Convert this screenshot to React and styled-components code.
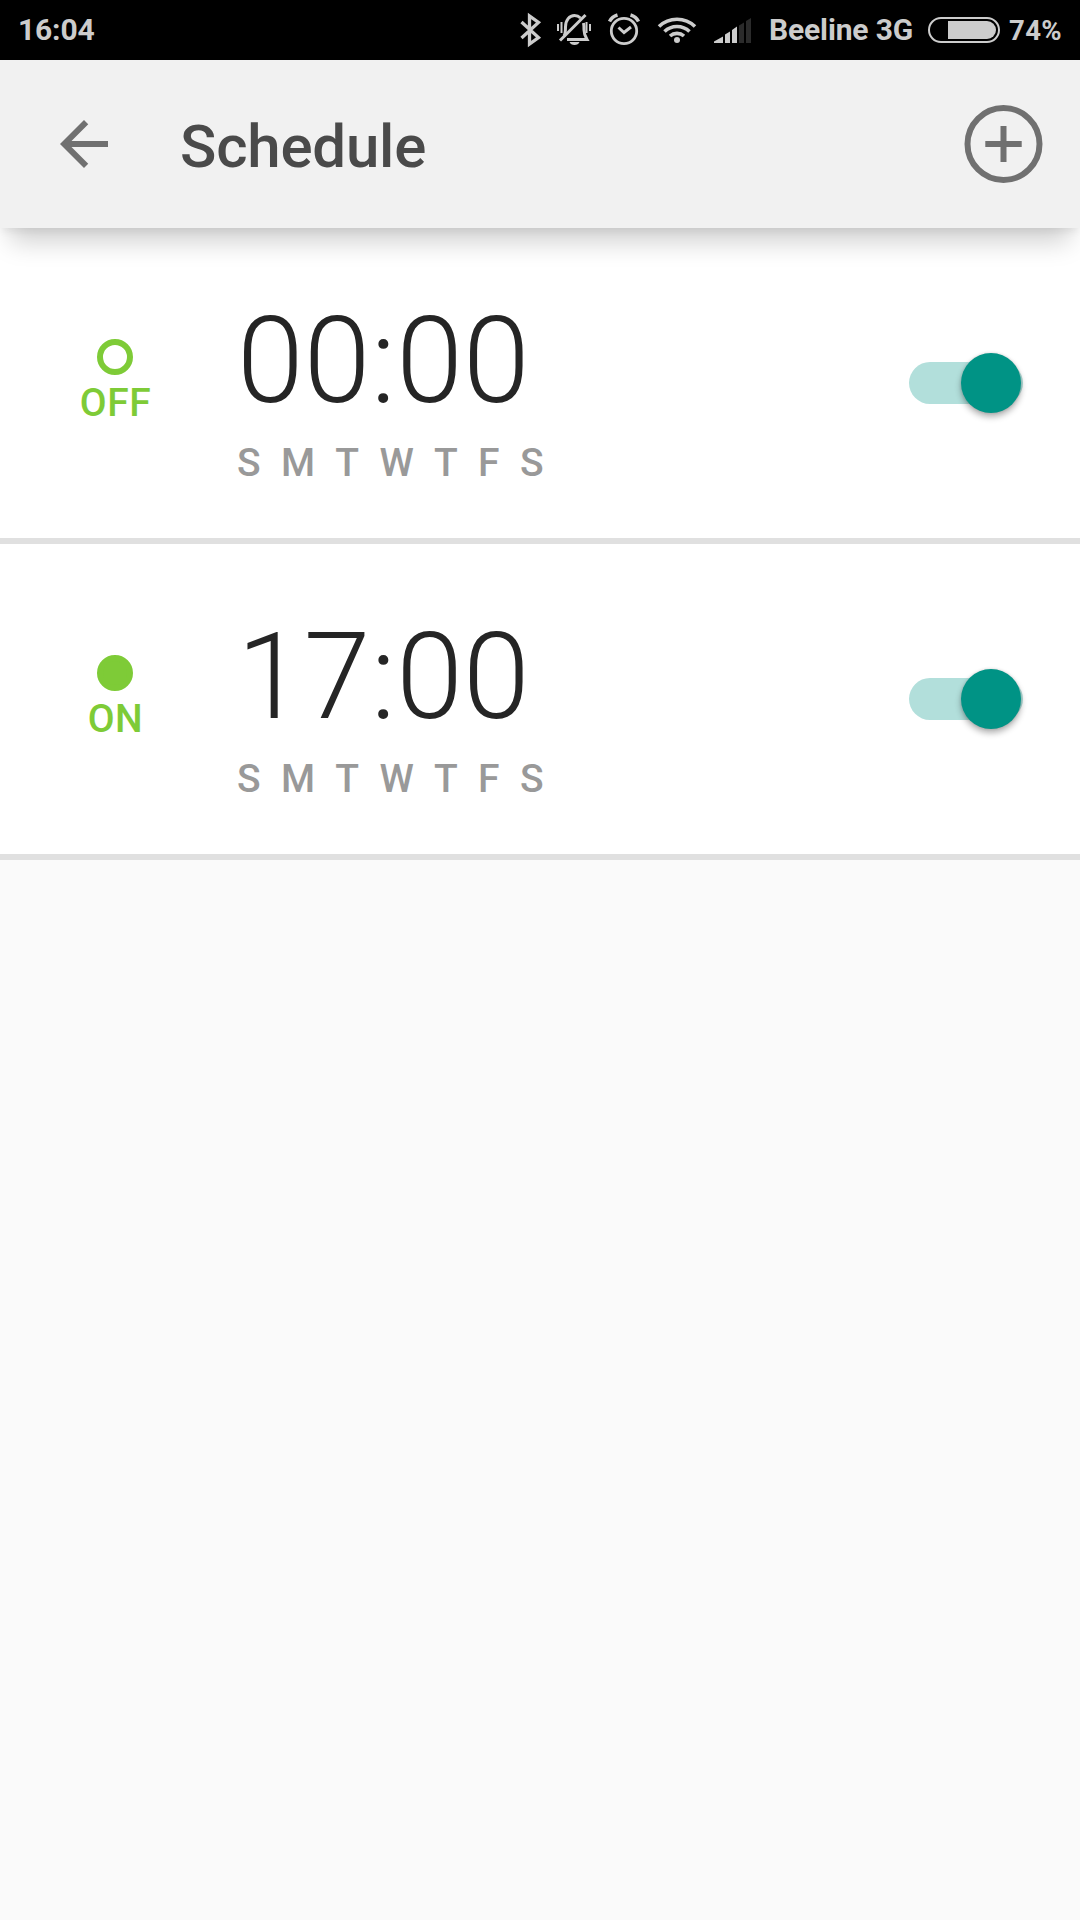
import React, { useState } from "react"
import styled, { createGlobalStyle } from "styled-components"

const GlobalStyle = createGlobalStyle`
  * {
    box-sizing: border-box;
  }

  body {
    margin: 0;
    background: #fafafa;
    font-family: Roboto, "Noto Sans", sans-serif;
  }
`

const Screen = styled.div`
  display: flex;
  flex-direction: column;
  width: 1080px;
  height: 1920px;
  overflow: hidden;
  background: #fafafa;
`

const StatusBarStyles = styled.div`
  display: flex;
  align-items: center;
  justify-content: space-between;
  height: 60px;
  padding: 0 18px;
  background: #000;
  color: #ccc;
  font-size: 30px;
  font-weight: 700;
  line-height: 60px;
  letter-spacing: -0.15px;
  white-space: nowrap;

  svg {
    display: block;
    flex: none;
  }
`

const StatusGroup = styled.div`
  display: flex;
  align-items: center;
`

const Carrier = styled.span`
  margin-left: 16px;
  width: 143px;
`

const Battery = styled.div`
  display: flex;
  justify-content: flex-end;
  width: 72px;
  height: 26px;
  margin-left: 16px;
  padding: 2px;
  border: 2px solid #ccc;
  border-radius: 13px;
`

const BatteryLevel = styled.div`
  height: 18px;
  border-radius: 0 9px 9px 0;
  background: #ccc;
`

const Percent = styled.span`
  width: 53px;
  margin-left: 9px;
  padding-top: 1px;
  font-size: 27.5px;
  letter-spacing: 0.4px;
`

const Header = styled.header`
  position: relative;
  z-index: 1;
  display: flex;
  align-items: center;
  height: 168px;
  padding: 0 37px 0 48px;
  background: #f1f1f1;
  box-shadow:
    0 5px 8px -2px rgba(0, 0, 0, 0.07),
    0 24px 24px -10px rgba(0, 0, 0, 0.18);
`

const IconButton = styled.button`
  display: flex;
  padding: 0;
  border: 0;
  background: none;
  color: #707070;

  svg {
    display: block;
  }
`

const Title = styled.h1`
  flex: 1;
  margin: 6px 0 0 60px;
  color: #4a4a4a;
  font-size: 60px;
  font-weight: 500;
  line-height: 70px;
  letter-spacing: -0.2px;
`

const Row = styled.section`
  display: flex;
  height: 316px;
  padding-right: 57px;
  border-bottom: 6px solid #e0e0e0;
  background: #fff;
`

const State = styled.div`
  display: flex;
  flex-direction: column;
  align-items: center;
  width: 230px;
  padding-top: 111px;
  color: #7ecb37;
  font-size: 39px;
  font-weight: 500;
  line-height: 46px;
`

const StateLabel = styled.span`
  padding-left: 1px;
  letter-spacing: 0.6px;
`

const Dot = styled.span`
  width: 36px;
  height: 36px;
  margin-bottom: 5px;
  border: 6px solid #7ecb37;
  border-radius: 50%;
  background: ${(props) => (props.$filled ? "#7ecb37" : "transparent")};
`

const Details = styled.div`
  flex: 1;
  padding: 63px 0 0 7px;
`

const Time = styled.div`
  color: #252525;
  font-size: 120px;
  font-weight: 300;
  line-height: 141px;
  letter-spacing: 0.3px;
`

const Days = styled.div`
  display: flex;
  gap: 20.3px;
  margin-top: 8px;
  color: #999;
  font-size: 39px;
  font-weight: 500;
  line-height: 46px;
`

const Toggle = styled.button`
  display: flex;
  align-items: center;
  justify-content: ${(props) => (props.$on ? "flex-end" : "flex-start")};
  align-self: center;
  width: 114px;
  height: 42px;
  padding: 0 2px 1px 0;
  border: 0;
  border-radius: 21px;
  background: ${(props) => (props.$on ? "#b2dfdb" : "#b9b9b9")};
`

const Thumb = styled.span`
  flex: none;
  width: 60px;
  height: 60px;
  border-radius: 50%;
  background: ${(props) => (props.$on ? "#009385" : "#f1f1f1")};
  box-shadow:
    0 0 3px rgba(0, 0, 0, 0.15),
    0 4px 6px rgba(0, 0, 0, 0.3);
`

// All five indicators share one strip so their spacing stays fixed
const Indicators = () => (
  <svg width="234" height="60" viewBox="519 0 234 60" fill="none" stroke="#ccc">
    <path
      d="M521.5 22l17 15.500-9 6.500V16l9 6.500-17 15.500"
      strokeWidth="3.300"
    />
    {/* muted bell */}
    <g strokeWidth="3">
      <path d="M564 36c1.500-2 1.500-4 1.500-9 0-7 4-11.500 9-11.500 2.500 0 4.500 1 6 2.500" />
      <path d="M583.500 23c.5 2 .5 4 .5 7 0 4 1 6 3 9.500H567" />
      <path d="M560 40.500L585.500 15" />
    </g>
    <path d="M569.500 42h10c-1 4-9 4-10 0z" fill="#ccc" stroke="none" />
    <path d="M558 24v7M561.500 22v11M586.500 22v11M590 24v7" strokeWidth="2" />
    {/* alarm */}
    <circle cx="624" cy="31" r="12.700" strokeWidth="2.800" />
    <path d="M618.500 27.500l5.500 5 7-5.500" strokeWidth="3" />
    <path d="M609.500 21.500c1.500-3 4.500-5.500 8-6.500M638.500 21.500c-1.500-3-4.500-5.500-8-6.500" strokeWidth="3.500" />
    {/* wifi */}
    <path
      d="M659 26.500a26 26 0 0 1 36 0M664.500 31.500a18 18 0 0 1 25 0M670 36a10.500 10.500 0 0 1 14 0"
      strokeWidth="3.600"
    />
    <circle cx="677" cy="40" r="3" fill="#ccc" stroke="none" />
    {/* signal */}
    <g stroke="none" fill="#ccc">
      <path d="M714 43v-1.500l9-5V43zM725 43v-8.500l5-3V43zM732 43V30l5-3.500V43z" />
      <path d="M739 43V25.500l5-3V43zM746 43V21l5-3v25z" fill="#2b2b2b" />
    </g>
  </svg>
)

const StatusBar = ({ battery }) => (
  <StatusBarStyles>
    <span>16:04</span>
    <StatusGroup>
      <Indicators />
      <Carrier>Beeline 3G</Carrier>
      <Battery>
        <BatteryLevel style={{ width: `${battery * 0.65}px` }} />
      </Battery>
      <Percent>{battery}%</Percent>
    </StatusGroup>
  </StatusBarStyles>
)

const ScheduleRow = ({ action, time }) => {
  const [enabled, setEnabled] = useState(true)
  return (
    <Row>
      <State>
        <Dot $filled={action === "ON"} />
        <StateLabel>{action}</StateLabel>
      </State>
      <Details>
        <Time>{time}</Time>
        <Days>
          {["S", "M", "T", "W", "T", "F", "S"].map((day, index) => (
            <span key={index}>{day}</span>
          ))}
        </Days>
      </Details>
      <Toggle
        $on={enabled}
        role="switch"
        aria-checked={enabled}
        onClick={() => setEnabled(!enabled)}
      >
        <Thumb $on={enabled} />
      </Toggle>
    </Row>
  )
}

const schedules = [
  { action: "OFF", time: "00:00" },
  { action: "ON", time: "17:00" },
]

const App = () => (
  <>
    <GlobalStyle />
    <Screen>
      <StatusBar battery={74} />
      <Header>
        <IconButton aria-label="Back">
          <svg width="72" height="72" viewBox="0 0 24 24" fill="currentColor">
            <path d="M20 11H7.830l5.590-5.590L12 4l-8 8 8 8 1.410-1.410L7.830 13H20v-2z" />
          </svg>
        </IconButton>
        <Title>Schedule</Title>
        <IconButton aria-label="Add">
          <svg
            width="79"
            height="78"
            viewBox="0 0 79 78"
            fill="none"
            stroke="currentColor"
            strokeWidth="6"
          >
            <circle cx="39.500" cy="39" r="36" />
            <path d="M39.500 21v36M21.300 39h36.400" />
          </svg>
        </IconButton>
      </Header>
      {schedules.map((schedule) => (
        <ScheduleRow key={schedule.time} {...schedule} />
      ))}
    </Screen>
  </>
)

export default App
